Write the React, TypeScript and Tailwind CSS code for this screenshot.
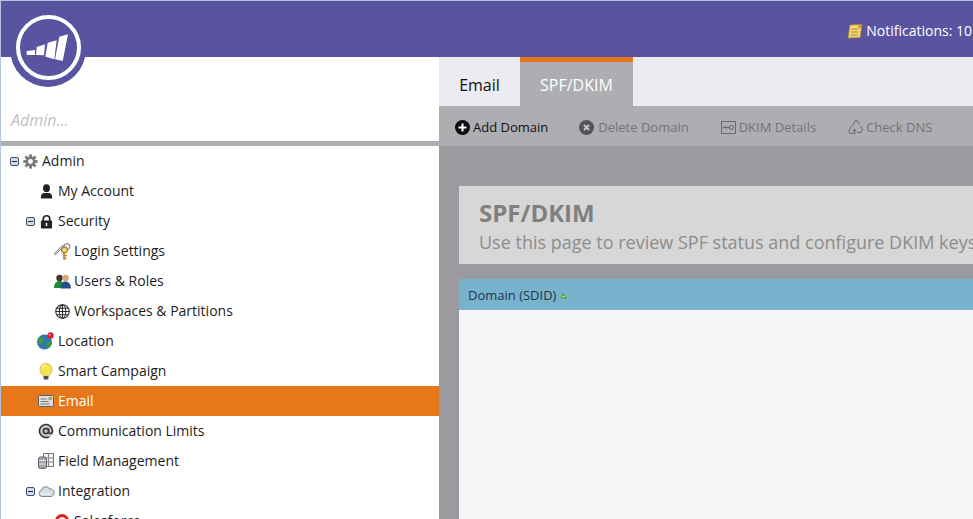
import type { ReactNode } from 'react';

const Toggle = () => (
  <span className="w-[9px] h-[9px] border border-[#43506b] bg-[#cfdcec] rounded-[2px] flex items-center justify-center shrink-0">
    <span className="w-[5px] h-px bg-[#1f2937]" />
  </span>
);

const GearIcon = () => (
  <svg width="15" height="15" viewBox="0 0 16 16">
    <g fill="#7a7a7a">
      <circle cx="8" cy="8" r="5.400" />
      {[0, 45, 90, 135, 180, 225, 270, 315].map(a => (
        <rect key={a} x="6.500" y="0.400" width="3" height="3.400" transform={`rotate(${a} 8 8)`} />
      ))}
    </g>
    <circle cx="8" cy="8" r="2.600" fill="#fff" />
  </svg>
);

const PersonIcon = () => (
  <svg width="13" height="15" viewBox="0 0 14 16">
    <ellipse cx="7" cy="4.400" rx="3.700" ry="4.200" fill="#222" />
    <path d="M1 15.500c-.4-3.600 1-6 3.600-6h4.800c2.600 0 4 2.400 3.600 6z" fill="#222" />
  </svg>
);

const LockIcon = () => (
  <svg width="13" height="15" viewBox="0 0 14 15">
    <path d="M3.500 7V4.800a3.500 3.500 0 0 1 7 0V7" fill="none" stroke="#222" strokeWidth="1.800" />
    <rect x="1" y="6.500" width="12" height="8.500" rx="1" fill="#222" />
    <rect x="6.200" y="9" width="1.600" height="3.400" fill="#fff" />
  </svg>
);

const KeysIcon = () => (
  <svg width="17" height="17" viewBox="0 0 17 17">
    <path d="M1 11l8-8" stroke="#8a8a8a" strokeWidth="2.400" strokeLinecap="round" />
    <path d="M1 11l8-8" stroke="#e6e6e6" strokeWidth="1" strokeLinecap="round" />
    <circle cx="13" cy="3.500" r="3" fill="#ececec" stroke="#777" />
    <circle cx="10.500" cy="7" r="3" fill="#f1cf6a" stroke="#8a6a1c" />
    <path d="M10 9.500v7M10 12.500h2.800M10 15.500h2.400" stroke="#a9801d" strokeWidth="1.600" fill="none" />
  </svg>
);

const UsersIcon = () => (
  <svg width="17" height="15" viewBox="0 0 17 15">
    <circle cx="5.500" cy="4" r="3.200" fill="#4b3222" />
    <path d="M0 14c0-4.500 2-7 5.500-7S10.500 9.500 10.500 14z" fill="#1f8a3c" />
    <circle cx="11.500" cy="4" r="3.200" fill="#d9a679" />
    <path d="M6.500 14.500c0-4.500 2-7 5-7s5.500 2.500 5.500 7z" fill="#244f8f" />
  </svg>
);

const GlobeIcon = () => (
  <svg width="15" height="15" viewBox="0 0 16 16" fill="none" stroke="#2b2b2b" strokeWidth="1.100">
    <circle cx="8" cy="8" r="7.200" />
    <ellipse cx="8" cy="8" rx="3.400" ry="7.200" />
    <path d="M1 8h14M2 4.500h12M2 11.500h12M8 1v14" />
  </svg>
);

const LocationIcon = () => (
  <svg width="18" height="18" viewBox="0 0 18 18">
    <circle cx="7.500" cy="10" r="7.500" fill="#2f78b5" />
    <path d="M2 6c2-1.500 5-.5 5 1.500S5 10 5 12s-3.500-.5-4-2.500zM10 10.500c2-1 5-.5 5 .5s-2.500 5-4.500 5S9 11.500 10 10.500z" fill="#3f9a35" />
    <circle cx="13.500" cy="3.500" r="3.200" fill="#d8202a" />
    <circle cx="12.700" cy="2.700" r="1" fill="#f8b0b0" />
  </svg>
);

const BulbIcon = () => (
  <svg width="14" height="17" viewBox="0 0 14 17">
    <path d="M7 .5a6.200 6.200 0 0 0-3.500 11.200c.6.500.8 1 .8 1.500h5.400c0-.5.2-1 .8-1.500A6.200 6.200 0 0 0 7 .5z" fill="#f4e35a" stroke="#c2ad38" strokeWidth=".7" />
    <path d="M4 3.500a3.500 3.500 0 0 1 3-1.500" stroke="#fffbd0" strokeWidth="1.200" fill="none" />
    <rect x="4.500" y="13" width="5" height="3.500" rx="1" fill="#4f4f4f" />
  </svg>
);

const MailIcon = () => (
  <svg width="16" height="12" viewBox="0 0 16 12">
    <rect x=".5" y=".5" width="15" height="11" rx="1.200" fill="#dedede" stroke="#5f5f5f" />
    <rect x="10.500" y="2" width="3.500" height="3" fill="#9aa85a" />
    <path d="M2.500 4h6M2.500 6.500h8M2.500 9h9" stroke="#777" />
  </svg>
);

const AtIcon = () => (
  <svg width="16" height="16" viewBox="0 0 16 16" fill="none">
    <circle cx="8" cy="8" r="7.500" fill="#c9c9c9" />
    <g stroke="#333" strokeWidth="1.500">
      <circle cx="8" cy="8" r="2.600" />
      <path d="M10.600 5.500v3.700c0 2 3.900 2 3.900-1.200A6.500 6.500 0 1 0 11 13.800" />
    </g>
  </svg>
);

const FieldIcon = () => (
  <svg width="16" height="16" viewBox="0 0 16 16">
    <rect x="5.500" y=".5" width="10" height="13" fill="#f4f4f4" stroke="#777" />
    <path d="M10.500 1v12M6 5h9M6 9h9" stroke="#888" />
    <rect x=".5" y="4" width="8" height="11.500" rx="2" fill="#a2a8ad" stroke="#5d6166" />
    <path d="M1 7.500h7M1 11h7" stroke="#e6e6e6" />
  </svg>
);

const CloudIcon = () => (
  <svg width="17" height="12" viewBox="0 0 17 12">
    <path d="M4 11.500a3.200 3.200 0 0 1-.5-6.300A4.500 4.500 0 0 1 11.800 4 3.800 3.800 0 0 1 13 11.500z" fill="#d5dde6" stroke="#7d868e" />
    <path d="M3 9h10" stroke="#f4f6f8" />
  </svg>
);

const SalesforceIcon = () => (
  <svg width="16" height="16" viewBox="0 0 16 16">
    <circle cx="8" cy="8" r="7" fill="#d4261f" />
    <path d="M4 7c1-3 5-4 8-1l-2 1-1 2H6z" fill="#fff" />
  </svg>
);

interface TreeRowProps {
  indent: number;
  toggle?: boolean;
  icon: ReactNode;
  label: string;
  active?: boolean;
}

// indent is the left edge of the toggle column
function TreeRow({ indent, toggle, icon, label, active }: TreeRowProps) {
  const pad = indent === 0 ? 'pl-[9px]' : indent === 1 ? 'pl-[25px]' : 'pl-[41px]';
  return (
    <div className={`h-[30px] flex items-center shrink-0 ${pad} ${active ? 'bg-[#e8761a] text-white' : 'text-[#1d1d1d]'}`}>
      <span className="w-[11px] flex items-center shrink-0">{toggle && <Toggle />}</span>
      <span className="w-[18px] h-[18px] flex items-center justify-center shrink-0">{icon}</span>
      <span className="ml-[3px] whitespace-nowrap">{label}</span>
    </div>
  );
}

interface ToolButtonProps {
  icon: ReactNode;
  label: string;
  disabled?: boolean;
  className?: string;
}

const ToolButton = ({ icon, label, disabled, className = '' }: ToolButtonProps) => (
  <div className={`flex items-center gap-[3px] ${disabled ? 'text-[#737277]' : 'text-[#111]'} ${className}`}>
    {icon}
    <span className="text-[13px] whitespace-nowrap">{label}</span>
  </div>
);

export default function App() {
  return (
    <div className="w-[973px] h-[519px] overflow-hidden relative flex flex-col bg-white border-t border-l border-[#b4c6dd] text-sm font-['Open_Sans',sans-serif]">
      {/* Header */}
      <div className="h-[56px] shrink-0 bg-[#5a53a2] flex items-center justify-end text-white">
        <div className="flex items-center gap-[3px] mr-[1px] mt-[4px] whitespace-nowrap">
          <svg width="16" height="15" viewBox="0 0 16 15">
            <path d="M3 1l12-.5-2 13L1 14z" fill="#f3d97a" stroke="#b28a25" strokeWidth=".8" />
            <path d="M4.500 5h7M4 8h7M3.500 11h7" stroke="#a8862c" />
            <circle cx="13" cy="2.500" r="1.800" fill="#e98a2a" />
          </svg>
          <span>Notifications: 10</span>
        </div>
      </div>

      {/* Logo badge */}
      <div className="absolute left-[9px] top-[10px] w-[76px] h-[76px] rounded-full bg-[#5a53a2] flex items-center justify-center pb-[3px]">
        <div className="w-[65px] h-[65px] rounded-full border-[4px] border-white flex items-center justify-center pr-[2px]">
          <svg className="shrink-0" width="43" height="28" viewBox="0 0 43 28">
            <path fill="#fff" d="M.7 17L9 16v5H.7zM10.700 13L19 10.300l-1 11-8-.3zM21.700 8.700l9-2.400-2.400 19-9-2.600zM33.300 2.700L42 .3 36.700 27 29 25.300z" />
          </svg>
        </div>
      </div>

      <div className="flex-1 flex min-h-0">
        {/* Sidebar */}
        <div className="w-[438px] shrink-0 flex flex-col">
          <div className="h-[84px] shrink-0 flex items-end pb-[9px] pl-[10px] italic text-[#c2c0c0] text-base">Admin...</div>
          <div className="h-[5px] shrink-0 bg-[#aeadb1]" />
          <div className="flex-1 flex flex-col min-h-0 overflow-hidden">
            <TreeRow indent={0} toggle icon={<GearIcon />} label="Admin" />
            <TreeRow indent={1} icon={<PersonIcon />} label="My Account" />
            <TreeRow indent={1} toggle icon={<LockIcon />} label="Security" />
            <TreeRow indent={2} icon={<KeysIcon />} label="Login Settings" />
            <TreeRow indent={2} icon={<UsersIcon />} label="Users & Roles" />
            <TreeRow indent={2} icon={<GlobeIcon />} label="Workspaces & Partitions" />
            <TreeRow indent={1} icon={<LocationIcon />} label="Location" />
            <TreeRow indent={1} icon={<BulbIcon />} label="Smart Campaign" />
            <TreeRow indent={1} active icon={<MailIcon />} label="Email" />
            <TreeRow indent={1} icon={<AtIcon />} label="Communication Limits" />
            <TreeRow indent={1} icon={<FieldIcon />} label="Field Management" />
            <TreeRow indent={1} toggle icon={<CloudIcon />} label="Integration" />
            <TreeRow indent={2} icon={<SalesforceIcon />} label="Salesforce" />
          </div>
        </div>

        {/* Main */}
        <div className="flex-1 min-w-0 flex flex-col bg-[#9b9a9f]">
          <div className="h-[49px] shrink-0 bg-[#ecebf2] flex text-base">
            <div className="w-[81px] flex items-center justify-center pt-[6px] text-[#111]">Email</div>
            <div className="w-[113px] flex items-center justify-center pt-[1px] bg-[#aeadb1] border-t-[5px] border-[#e8761a] text-white">SPF/DKIM</div>
          </div>
          <div className="h-[40px] shrink-0 bg-[#aeadb1] flex items-center pl-[16px] pt-[2px] gap-[31px]">
            <ToolButton
              label="Add Domain"
              icon={
                <svg width="15" height="15" viewBox="0 0 15 15">
                  <circle cx="7.500" cy="7.500" r="7.500" fill="#0b0b0b" />
                  <path d="M7.500 3.500v8M3.500 7.500h8" stroke="#fff" strokeWidth="2" />
                </svg>
              }
            />
            <ToolButton
              disabled
              label="Delete Domain"
              icon={
                <svg width="16" height="15" viewBox="0 0 16 15">
                  <circle cx="7.500" cy="7.500" r="7.500" fill="#545358" />
                  <path d="M5 5l5 5M10 5l-5 5" stroke="#c9c8cc" strokeWidth="1.800" />
                </svg>
              }
            />
            <ToolButton
              disabled
              className="ml-[1px]"
              label="DKIM Details"
              icon={
                <svg width="15" height="13" viewBox="0 0 15 13" fill="none" stroke="#68676c">
                  <rect x=".5" y=".5" width="14" height="12" />
                  <circle cx="10.500" cy="6.500" r="2" />
                  <path d="M2 6.500h6.500" strokeWidth="1.500" />
                </svg>
              }
            />
            <ToolButton
              disabled
              className="ml-[1px]"
              label="Check DNS"
              icon={
                <svg width="15" height="15" viewBox="0 0 15 15" fill="none" stroke="#68676c">
                  <path d="M4.500 6l2.500-5h2.500l2 3.500M12.500 6l2 3-1.500 3.500H9M5.500 13.500H2L.8 10.500 3.500 6" />
                  <path d="M6.500 14.500v-5M4.800 11.200l1.700-2 1.700 2" />
                </svg>
              }
            />
          </div>
          <div className="flex-1 min-h-0 flex flex-col pl-[20px] pt-[40px]">
            <div className="h-[78px] shrink-0 bg-[#d7d7d7] pl-[20px] pt-[11px] overflow-hidden whitespace-nowrap">
              <div className="text-[24px] leading-[32px] font-bold text-[#808080]">SPF/DKIM</div>
              <div className="text-[18px] leading-[27px] text-[#8d8d8d]">Use this page to review SPF status and configure DKIM keys for your domains.</div>
            </div>
            <div className="mt-[15px] h-[31px] shrink-0 bg-[#78b3ce] flex items-center pl-[9px] pt-[2px] text-[13px] text-[#24344a]">
              Domain (SDID)
              <svg className="ml-[4px]" width="7" height="7" viewBox="0 0 7 7">
                <path d="M3.500 .5L7 6.500H0z" fill="#5aa832" />
                <path d="M2.500 4.500h2" stroke="#d7f0c0" />
              </svg>
            </div>
            <div className="flex-1 bg-[#f5f5f5]" />
          </div>
        </div>
      </div>
    </div>
  );
}
